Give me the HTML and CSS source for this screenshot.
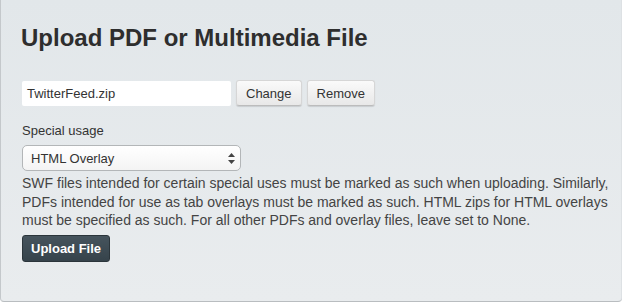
FILE: index.html
```html
<!DOCTYPE html>
<html lang="en">
<head>
    <meta charset="UTF-8">
    <title>Upload PDF or Multimedia File</title>
    <link rel="stylesheet" href="styles.css">
</head>
<body>
    <div id="upload-panel">
        <h1 class="panel-title">Upload PDF or Multimedia File</h1>

        <!-- File picker -->
        <div class="file-row">
            <div class="file-name">TwitterFeed.zip</div>
            <button class="btn">Change</button>
            <button class="btn">Remove</button>
        </div>

        <!-- Special usage -->
        <label class="field-label" for="usage">Special usage</label>
        <div class="select-wrap">
            <select id="usage" class="usage-select">
                <option>None</option>
                <option selected>HTML Overlay</option>
            </select>
            <svg class="select-arrows" width="7" height="11" viewBox="0 0 7 11">
                <path d="M3.5 0 L7 4 L0 4 Z" fill="#444"/>
                <path d="M0 7 L7 7 L3.5 11 Z" fill="#444"/>
            </svg>
        </div>
        <p class="help-text">SWF files intended for certain special uses must be marked as such when uploading. Similarly, PDFs intended for use as tab overlays must be marked as such. HTML zips for HTML overlays must be specified as such. For all other PDFs and overlay files, leave set to None.</p>

        <button class="btn-primary">Upload File</button>
    </div>
</body>
</html>
```

FILE: styles.css
```css
body, html {
    margin: 0;
    padding: 0;
    font-family: "Liberation Sans", Arial, sans-serif;
    background-color: #fff;
    color: #333;
}

#upload-panel {
    box-sizing: border-box;
    width: 622px;
    height: 302px;
    padding: 24px 12px 0 21px;
    background: linear-gradient(#e2e7ea, #e9ecee);
    border-left: 1px solid #c4c8cb;
    border-bottom: 1px solid #b9bdc0;
    border-radius: 0 0 4px 4px;
    box-shadow: inset -1px 0 0 #dde1e4;
}

.panel-title {
    margin: 0 0 28px -1px;
    font-size: 24px;
    line-height: 28px;
    font-weight: bold;
    color: #2e2e2e;
}

.file-row {
    display: flex;
    gap: 5px;
    align-items: center;
    margin-bottom: 17px;
}

.file-name {
    box-sizing: border-box;
    width: 209px;
    height: 25px;
    padding: 0 5px;
    background: #fff;
    border-radius: 2px;
    font-size: 13px;
    line-height: 25px;
}

.btn {
    height: 26px;
    padding: 0 9px;
    background: linear-gradient(#fafafa, #e8e8e8);
    border: 1px solid #d6d6d6;
    border-bottom-color: #bcbcbc;
    border-radius: 3px;
    box-shadow: 0 1px 1px rgba(0, 0, 0, 0.12);
    font-family: inherit;
    font-size: 13px;
    color: #333;
}

.field-label {
    display: block;
    font-size: 13px;
    line-height: 16px;
    margin-bottom: 6px;
}

.select-wrap {
    position: relative;
    width: 219px;
}

.usage-select {
    box-sizing: border-box;
    width: 219px;
    height: 26px;
    padding: 0 8px;
    appearance: none;
    background: linear-gradient(#ffffff, #f4f4f4);
    border: 1px solid #b3b6b8;
    border-radius: 5px;
    font-family: inherit;
    font-size: 13px;
    color: #333;
}

.select-arrows {
    position: absolute;
    right: 6px;
    top: 8px;
}

.help-text {
    margin: 3px 0 5px;
    font-size: 14px;
    line-height: 18.5px;
    color: #444;
}

.btn-primary {
    height: 27px;
    padding: 0 8px;
    background: linear-gradient(#46545d, #36434b);
    border: 1px solid #2b353b;
    border-radius: 3px;
    font-family: inherit;
    font-size: 13px;
    font-weight: bold;
    color: #fff;
}
```
